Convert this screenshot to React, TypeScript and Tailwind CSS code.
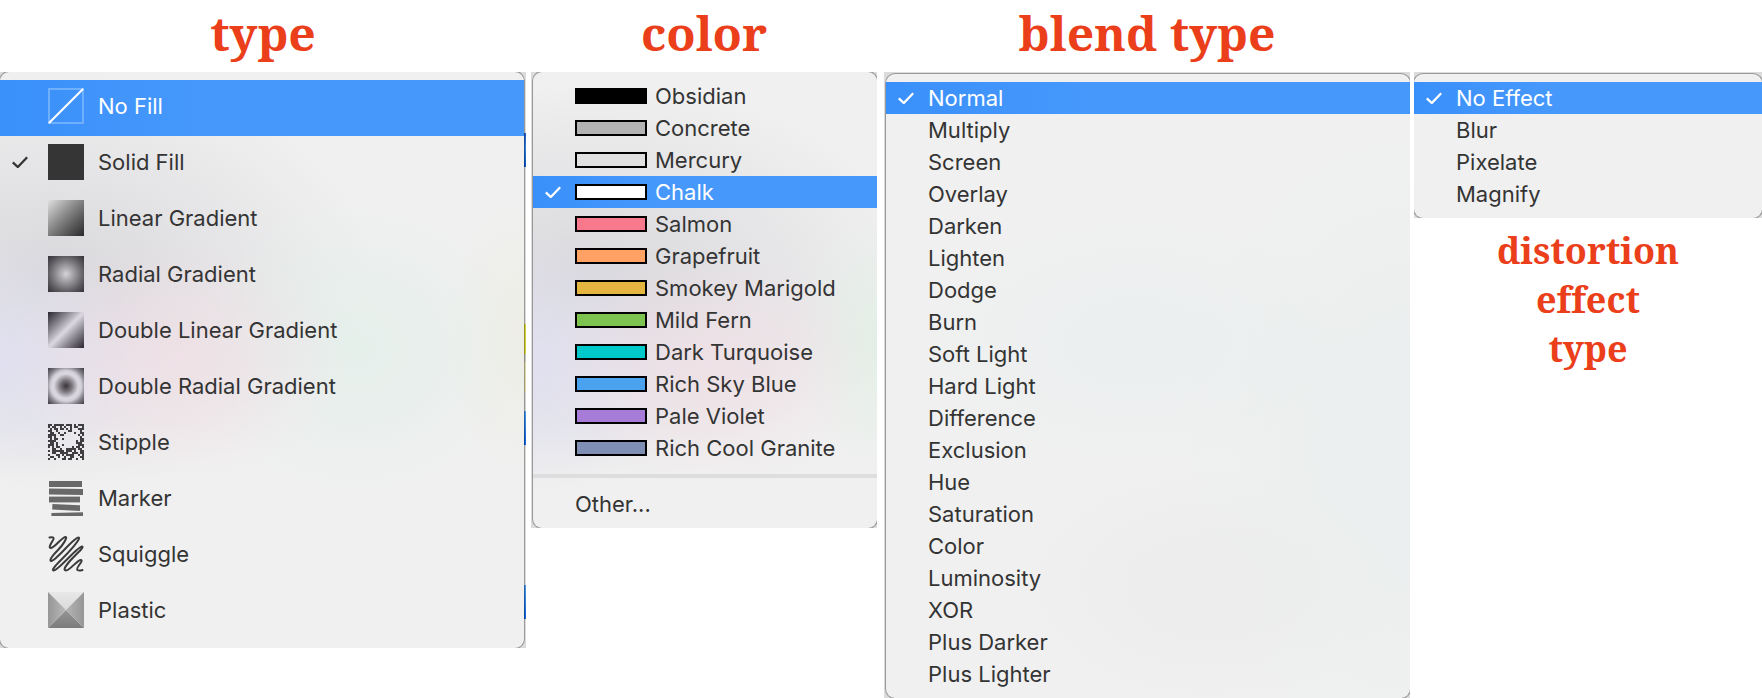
import { useState } from "react";
import type { ReactNode } from "react";

function Check() {
  return (
    <svg viewBox="0 0 16 12" className="h-3 w-4" fill="none" stroke="currentColor" strokeWidth="2.3" aria-hidden="true">
      <path d="M.8 6.4 L5.800 11 L15.200 1.200" />
    </svg>
  );
}

function Picture({ children }: { children: ReactNode }) {
  return (
    <svg viewBox="0 0 36 36" className="size-9 shrink-0" aria-hidden="true">
      {children}
    </svg>
  );
}

const STIPPLE = [
  "##.#####.###.#.###",
  "#.##..#.#..#.##..#",
  ".#.##.##.#.#...###",
  "##..#.....##....#.",
  ".##..#..#....#..##",
  "####..##.......#.#",
  "##.#............#.",
  ".#.##..#........##",
  "####..........#.##",
  ".##.#.........###.",
  "###.#..#.......###",
  "#.#.##......#.##.#",
  "..##..#..#####.##.",
  "#.######.###.#..##",
  "..##..####..###.##",
  "#...##.#.####..#.#",
  ".##..#..#..##...##",
  "#..#...##.##..#..#",
];

const stipplePath = STIPPLE.map((row, y) =>
  [...row].map((c, x) => (c === "#" ? `M${x * 2} ${y * 2}h2v2h-2z` : "")).join("")
).join("");

const fills: { name: string; icon: ReactNode }[] = [
  {
    name: "No Fill",
    icon: (
      <Picture>
        <rect x="1" y="1" width="34" height="34" fill="none" stroke="#6fb0fc" strokeWidth="2" />
        <path d="M1.5 34.5 L34.5 1.5" stroke="#fff" strokeWidth="2.2" strokeLinecap="round" />
      </Picture>
    ),
  },
  { name: "Solid Fill", icon: <span className="size-9 bg-[#353535]" /> },
  { name: "Linear Gradient", icon: <span className="size-9 bg-linear-to-br from-[#e0e0e0] to-[#2a2a2a]" /> },
  {
    name: "Radial Gradient",
    icon: <span className="size-9 bg-[radial-gradient(circle,#d5d2d8_0%,#8d8a8f_42%,#5a575d_72%,#343138_100%)]" />,
  },
  {
    name: "Double Linear Gradient",
    icon: <span className="size-9 bg-linear-to-br from-[#2c2932] via-[#dcd9e2] to-[#2c2932]" />,
  },
  {
    name: "Double Radial Gradient",
    icon: <span className="size-9 bg-[radial-gradient(circle,#38353a_0%,#777379_22%,#dcd8e0_48%,#d4d0d9_60%,#89858d_76%,#3b383f_100%)]" />,
  },
  {
    name: "Stipple",
    icon: (
      <Picture>
        <path d={stipplePath} fill="#403e41" shapeRendering="crispEdges" />
      </Picture>
    ),
  },
  {
    name: "Marker",
    icon: (
      <Picture>
        <g fill="#696969">
          <path d="M1 1H34V7H1Z" />
          <path d="M1 8.6L35 9V15L1 14.4Z" />
          <path d="M1 16.6H32V22.4H1Z" />
          <path d="M4.4 24L32 25.2V31L4.2 29.6Z" />
          <path d="M3.4 33L35 32.2V36H3.4Z" />
        </g>
      </Picture>
    ),
  },
  {
    name: "Squiggle",
    icon: (
      <Picture>
        <path
          d="M1.5 1.5C6 .5 6.5 2 4.5 5C2 9 .5 12 3 12C7 11.5 14 1 17.5 1C20 1 15 9 10 14C5 19 1 24 3 25C7 26 26 1 30.5 1.5C34 2 20 17 13 24C9 28 3 34 5.5 34.5C10 35 30 10 34 10.5C37 11 26 20 21 26C17 31 15 34 18 34.5C22 34.5 30 23 33 24C36 25 27 32 29.5 34C31 35 33 34.5 34.5 34"
          fill="none"
          stroke="#3b3b3b"
          strokeWidth="2"
          strokeLinecap="round"
        />
      </Picture>
    ),
  },
  {
    name: "Plastic",
    icon: (
      <Picture>
        <defs>
          <linearGradient id="facet-top" x1="0" y1="0" x2="0" y2="1">
            <stop stopColor="#e8e8e8" />
            <stop offset="1" stopColor="#dadada" />
          </linearGradient>
          <linearGradient id="facet-bottom" x1="0" y1="0" x2="0" y2="1">
            <stop stopColor="#949494" />
            <stop offset="1" stopColor="#7c7c7c" />
          </linearGradient>
          <linearGradient id="facet-left">
            <stop stopColor="#969696" />
            <stop offset="1" stopColor="#bababa" />
          </linearGradient>
          <linearGradient id="facet-right">
            <stop stopColor="#b4b4b4" />
            <stop offset="1" stopColor="#969696" />
          </linearGradient>
        </defs>
        <path d="M0 0H36L18 18Z" fill="url(#facet-top)" />
        <path d="M0 36H36L18 18Z" fill="url(#facet-bottom)" />
        <path d="M0 0V36L18 18Z" fill="url(#facet-left)" />
        <path d="M36 0V36L18 18Z" fill="url(#facet-right)" />
      </Picture>
    ),
  },
];

const colors = [
  { name: "Obsidian", swatch: "bg-black" },
  { name: "Concrete", swatch: "bg-[#b3b3b3]" },
  { name: "Mercury", swatch: "bg-[#e0e0e0]" },
  { name: "Chalk", swatch: "bg-white" },
  { name: "Salmon", swatch: "bg-[#f8788c]" },
  { name: "Grapefruit", swatch: "bg-[#ffa264]" },
  { name: "Smokey Marigold", swatch: "bg-[#e4b640]" },
  { name: "Mild Fern", swatch: "bg-[#7cc34f]" },
  { name: "Dark Turquoise", swatch: "bg-[#00c9cc]" },
  { name: "Rich Sky Blue", swatch: "bg-[#4ba2ef]" },
  { name: "Pale Violet", swatch: "bg-[#a77bd8]" },
  { name: "Rich Cool Granite", swatch: "bg-[#7f8fb4]" },
];

const blends = [
  "Normal", "Multiply", "Screen", "Overlay", "Darken", "Lighten", "Dodge", "Burn", "Soft Light", "Hard Light",
  "Difference", "Exclusion", "Hue", "Saturation", "Color", "Luminosity", "XOR", "Plus Darker", "Plus Lighter",
];

const effects = ["No Effect", "Blur", "Pixelate", "Magnify"];

const heading = "h-[72px] text-center text-5xl leading-[65px] font-bold whitespace-nowrap text-[#eb3f1b] font-['Noto_Serif',serif]";
const sheet = "rounded-[9px] shadow-[0_0_0_1px_#0000004d]";

const rowLayouts = {
  plain: { row: "h-8 gap-3.5", mark: "w-4" },
  swatch: { row: "h-8 gap-2", mark: "mr-1.5 w-4" },
  picture: { row: "h-14 gap-3.5 pb-1", mark: "mr-1.5 w-4" },
};

type RowProps = {
  label: string;
  checked: boolean;
  active: boolean;
  layout?: keyof typeof rowLayouts;
  onPick: () => void;
  children?: ReactNode;
};

function Row({ label, checked, active, layout = "plain", onPick, children }: RowProps) {
  return (
    <li role="none">
      <button
        type="button"
        role="menuitemradio"
        aria-checked={checked}
        onClick={onPick}
        className={[
          "flex w-full items-center pl-3 text-left text-[22px] leading-8 whitespace-nowrap",
          rowLayouts[layout].row,
          active ? "bg-linear-to-r from-[#3a90fa] to-[#4698fb] to-40% text-white" : "text-[#343434]",
        ].join(" ")}
      >
        <span className={rowLayouts[layout].mark}>{checked && <Check />}</span>
        {children}
        <span>{label}</span>
      </button>
    </li>
  );
}

export default function App() {
  const [fill, setFill] = useState("Solid Fill");
  const [color, setColor] = useState("Chalk");
  const [blend, setBlend] = useState("Normal");
  const [effect, setEffect] = useState("No Effect");

  return (
    <main className="flex w-full items-start bg-white font-['Inter',sans-serif]">
      <section className="min-w-0 flex-[526]">
        <h2 className={heading}>type</h2>
        <div className="overflow-hidden bg-[linear-gradient(#dcdcdc_61px,#1f5fc8_61px,#2f7ee0_75px,#0b55c4_95px,#dcdcdc_95px,#dcdcdc_252px,#d8d33c_252px,#d8d33c_282px,#c9c9c0_282px,#c9c9c0_290px,#dedcae_290px,#dedcae_320px,#d4d4d4_320px,#d4d4d4_339px,#4a98e8_339px,#0b62dc_373px,#dcdcdc_373px,#dcdcdc_513px,#4a98e8_513px,#0b62dc_547px,#dcdcdc_547px)] pr-0.5">
          <ul
            role="menu"
            aria-label="type"
            className={`${sheet} bg-[#f0f0f0] bg-[radial-gradient(ellipse_170px_120px_at_34%_50%,#f3dfe6b3,#f3dfe600),radial-gradient(ellipse_170px_150px_at_68%_48%,#e0efe8b3,#e0efe800),radial-gradient(ellipse_80px_140px_at_100%_46%,#eeeee6,#eeeee600),radial-gradient(ellipse_170px_120px_at_0%_50%,#e0e0f0,#e0e0f000),radial-gradient(ellipse_320px_210px_at_10%_36%,#d8d7db,#d8d7db00)] py-2`}
          >
            {fills.map((f) => (
              <Row key={f.name} label={f.name} layout="picture" active={f.name === "No Fill"} checked={f.name === fill} onPick={() => setFill(f.name)}>
                {f.icon}
              </Row>
            ))}
          </ul>
        </div>
      </section>

      <section className="ml-[5px] min-w-0 flex-[346]">
        <h2 className={heading}>color</h2>
        <div className="overflow-hidden bg-[#dcdcdc] pl-0.5">
          <div
            className={`${sheet} bg-[#f0f0f0] bg-[radial-gradient(ellipse_170px_120px_at_52%_65%,#f3dfe6b3,#f3dfe600),radial-gradient(ellipse_80px_130px_at_100%_60%,#e0efe4cc,#e0efe400),radial-gradient(ellipse_150px_130px_at_0%_64%,#e0e0f0,#e0e0f000),radial-gradient(ellipse_330px_200px_at_16%_46%,#d8d7db,#d8d7db00)] py-2`}
          >
            <ul role="menu" aria-label="color">
              {colors.map((c) => (
                <Row key={c.name} label={c.name} layout="swatch" active={c.name === color} checked={c.name === color} onPick={() => setColor(c.name)}>
                  <span className={`h-4 w-[72px] border-2 border-black ${c.swatch}`} />
                </Row>
              ))}
            </ul>
            <hr className="my-2.5 h-1 border-0 bg-[#dedede]" />
            <button type="button" className="h-8 w-full pl-[42px] text-left text-[22px] leading-8 text-[#343434]">
              Other...
            </button>
          </div>
        </div>
      </section>

      <section className="ml-[7px] min-w-0 flex-[526]">
        <h2 className={heading}>blend type</h2>
        <div className="overflow-hidden bg-[#dcdcdc] pt-0.5 pl-0.5">
          <ul
            role="menu"
            aria-label="blend type"
            className={`${sheet} bg-[#f0f0f0] bg-[radial-gradient(ellipse_190px_120px_at_62%_82%,#ececec,#ececec00),radial-gradient(ellipse_220px_130px_at_48%_43%,#ebeff0,#ebeff000),radial-gradient(ellipse_240px_340px_at_100%_60%,#ebefef,#ebefef00)] py-2`}
          >
            {blends.map((b) => (
              <Row key={b} label={b} active={b === blend} checked={b === blend} onPick={() => setBlend(b)} />
            ))}
          </ul>
        </div>
      </section>

      <section className="ml-1 flex min-w-0 flex-[348] flex-col pt-[72px]">
        <div className="overflow-hidden bg-[#dcdcdc] pt-0.5">
          <ul role="menu" aria-label="distortion effect type" className={`${sheet} bg-[#f0f0f0] py-2`}>
            {effects.map((e) => (
              <Row key={e} label={e} active={e === effect} checked={e === effect} onPick={() => setEffect(e)} />
            ))}
          </ul>
        </div>
        <h2 className="mt-2 text-center text-4xl leading-[49px] font-bold text-[#eb3f1b] [font-variant-ligatures:none] font-['Noto_Serif',serif]">
          distortion
          <br />
          effect
          <br />
          type
        </h2>
      </section>
    </main>
  );
}
